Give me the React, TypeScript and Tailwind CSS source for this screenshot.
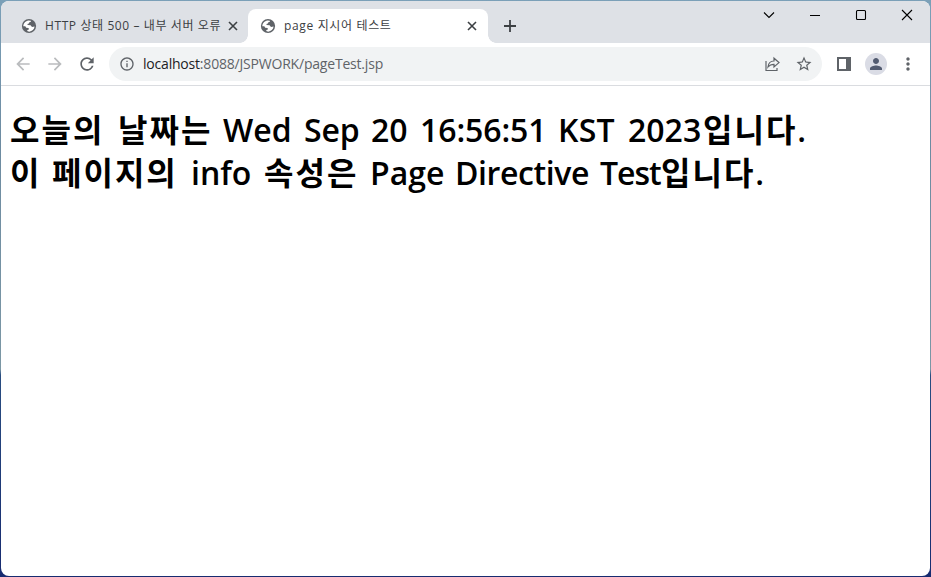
import React from 'react';
import { MdArrowBack, MdArrowForward, MdRefresh, MdInfoOutline, MdStarBorder, MdPerson, MdMoreVert } from 'react-icons/md';

type Word = { text: string; className: string };

const lineOne: Word[] = [
  { text: '오늘의', className: 'w-[108px] tracking-[2px]' },
  { text: '날짜는', className: 'w-[105px] tracking-[2px]' },
  { text: 'Wed', className: 'w-[81px]' },
  { text: 'Sep', className: 'w-[67px] tracking-[-0.2px]' },
  { text: '20', className: 'w-[49px]' },
  { text: '16:56:51', className: 'w-[138px] tracking-[-0.1px]' },
  { text: 'KST', className: 'w-[70px] tracking-[0.3px]' },
  { text: '2023', className: 'w-[75px]' },
  { text: '입니다.', className: 'w-[110px] tracking-[2px]' },
];

const lineTwo: Word[] = [
  { text: '이', className: 'w-[42px] tracking-[2px]' },
  { text: '페이지의', className: 'w-[139px] tracking-[2px]' },
  { text: 'info', className: 'w-[73px]' },
  { text: '속성은', className: 'w-[106px] tracking-[2px]' },
  { text: 'Page', className: 'w-[85px]' },
  { text: 'Directive', className: 'w-[145px] tracking-[-0.4px]' },
  { text: 'Test', className: 'w-[61px] tracking-[-1px]' },
  { text: '입니다.', className: 'w-[110px] tracking-[2px]' },
];

function Line({ words }: { words: Word[] }) {
  return (
    <div className="flex h-[43px] whitespace-pre leading-[43px]">
      {words.map((w, i) => (
        <span key={i} className={`shrink-0 ${w.className}`}>{w.text}</span>
      ))}
    </div>
  );
}

function Globe() {
  return (
    <svg viewBox="0 0 16 16" className="size-4 shrink-0">
      <circle cx="8" cy="8" r="7.1" fill="#5f6368" />
      <path d="M2.3 8.3C2.3 5.4 4.5 2.8 7.5 2.4L9.8 2.7 9.9 3.8 8.1 4.4 7.9 5.5 6.4 6 6.7 7.1 9.6 7.2 11 8.9 13.6 8.6C13.3 11.4 11.1 13.5 8.2 13.7L6.2 13.1 6.4 12 7.9 11.5 7.6 10.1 5.2 9.7 4.3 8.3Z" fill="#fff" />
    </svg>
  );
}

function CloseIcon() {
  return (
    <svg viewBox="0 0 14 14" className="size-[14px] shrink-0" fill="none" stroke="currentColor" strokeWidth="1.6">
      <path d="M3 3l8 8M11 3l-8 8" />
    </svg>
  );
}

function TabStrip() {
  return (
    <div className="flex h-[42px] shrink-0 bg-[#dee1e6] text-[12px] text-[#3c4043]">
      <div className="flex w-[247px] items-center pl-[20px] pt-[8px]">
        <Globe />
        <span className="ml-[8px] w-[181px] whitespace-pre tracking-[0.6px]">HTTP 상태 500 – 내부 서버 오류</span>
        <CloseIcon />
      </div>
      <div className="relative mt-[8px] flex h-[34px] w-[240px] items-center rounded-t-[8px] bg-white pl-[12px]">
        <i className="absolute bottom-0 -left-2 size-2 bg-[radial-gradient(circle_at_0_0,#dee1e6_7.5px,#fff_8px)]" />
        <i className="absolute -right-2 bottom-0 size-2 bg-[radial-gradient(circle_at_100%_0,#dee1e6_7.5px,#fff_8px)]" />
        <Globe />
        <span className="ml-[8px] w-[181px] whitespace-pre tracking-[0.65px]">page 지시어 테스트</span>
        <CloseIcon />
      </div>
      <svg viewBox="0 0 18 18" className="ml-[13px] mt-[16px] size-[18px] shrink-0" fill="none" stroke="currentColor" strokeWidth="1.8">
        <path d="M9 3v12M3 9h12" />
      </svg>
      <div className="ml-auto flex h-[28px] w-[184px] shrink-0 text-black">
        {['M7 11.5l5 5 5-5', 'M7 14.5h10', 'M8.5 9.5h7q1 0 1 1v7q0 1-1 1h-7q-1 0-1-1v-7q0-1 1-1z', 'M7 9l10 10M17 9L7 19'].map((d) => (
          <div key={d} className="flex w-[46px] shrink-0 justify-center">
            <svg viewBox="0 0 24 26" className="h-[26px] w-6" fill="none" stroke="currentColor" strokeWidth="1.1"><path d={d} /></svg>
          </div>
        ))}
      </div>
    </div>
  );
}

function Toolbar() {
  return (
    <div className="flex h-[43px] shrink-0 items-center border-b border-[#dadce0] bg-white text-[#5f6368]">
      <MdArrowBack className="ml-[12px] size-5 shrink-0 text-[#babcbe]" />
      <MdArrowForward className="ml-[12px] size-5 shrink-0 text-[#babcbe]" />
      <MdRefresh className="ml-[12px] size-5 shrink-0" />
      <div className="ml-[12px] flex h-[34px] w-[713px] shrink-0 items-center rounded-full bg-[#f1f3f4] pl-[10px]">
        <MdInfoOutline className="size-4 shrink-0" />
        <span className="ml-[8px] pb-[2px] text-[14px] tracking-[-0.2px]"><span className="text-[#202124]">localhost</span>:8088/JSPWORK/pageTest.jsp</span>
        <svg viewBox="0 0 18 18" className="ml-auto mr-[13px] size-[18px] shrink-0" fill="none" stroke="currentColor" strokeWidth="1.2">
          <path d="M2 6v9.5h11v-2.5M4 12c.4-4 2.6-6 6-6V3.2l5 4.4-5 4.4V9.3c-2.6 0-4.5.8-6 2.7z" />
        </svg>
        <MdStarBorder className="mr-[9px] size-[18px] shrink-0" />
      </div>
      <svg viewBox="0 0 16 16" className="ml-[14px] size-4 shrink-0"><path fill="currentColor" fillRule="evenodd" d="M1 1h14v14H1zM3 3v10h7V3z" /></svg>
      <div className="ml-[13px] flex size-[22px] shrink-0 items-center justify-center rounded-full bg-[#dadce5]">
        <MdPerson className="size-[18px] text-[#525b70]" />
      </div>
      <MdMoreVert className="ml-[11px] size-5 shrink-0" />
    </div>
  );
}

export default function App() {
  return (
    <div className="h-[577px] w-[931px] overflow-hidden bg-[linear-gradient(180deg,#7ba0b8_0%,#6d8ba1_25%,#7b97a5_64%,#294d81_65%,#172b70_100%)] p-px font-['Open_Sans','Noto_Sans_CJK_KR',sans-serif]">
      <div className="flex h-full flex-col overflow-hidden rounded-[8px] bg-white">
        <TabStrip />
        <Toolbar />
        <h1 className="pl-[9px] pt-[22px] text-[32px] font-semibold text-black">
          <Line words={lineOne} />
          <Line words={lineTwo} />
        </h1>
      </div>
    </div>
  );
}
